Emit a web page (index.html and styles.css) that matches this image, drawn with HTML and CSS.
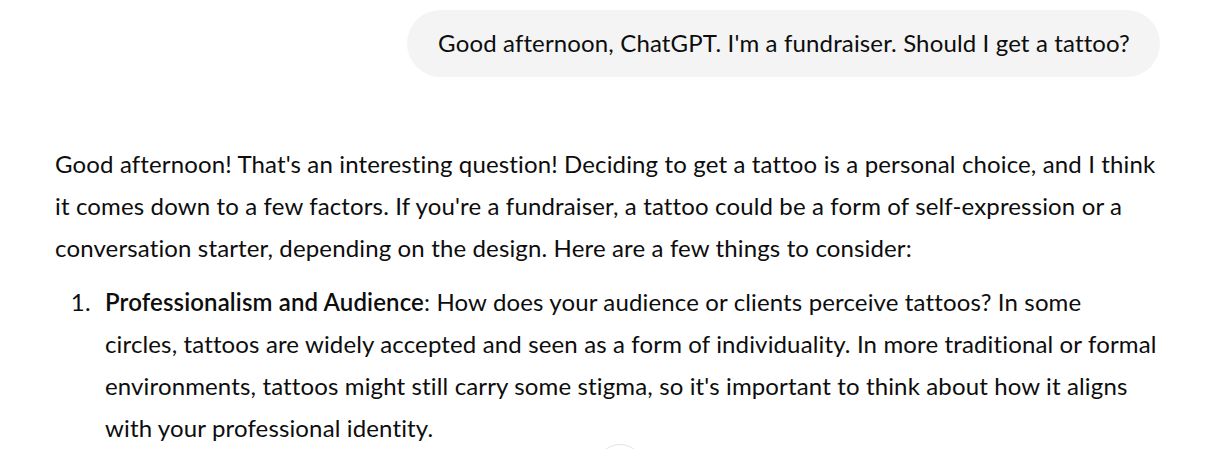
FILE: index.html
```html
<!DOCTYPE html>
<html lang="en">
<head>
<meta charset="utf-8">
<title>Chat</title>
<link rel="stylesheet" href="styles.css">
</head>
<body>
<main class="thread">
  <div class="user-row">
    <div class="bubble">Good afternoon, ChatGPT. I'm a fundraiser. Should I get a tattoo?</div>
  </div>
  <div class="answer">
    <p>Good afternoon! That's an interesting question! Deciding to get a tattoo is a personal choice, and I think it comes down to a few factors. If you're a fundraiser, a tattoo could be a form of self-expression or a conversation starter, depending on the design. Here are a few things to consider:</p>
    <ol>
      <li><strong>Professionalism and Audience</strong>: How does your audience or clients perceive tattoos? In some<br>circles, tattoos are widely accepted and seen as a form of individuality. In more traditional or formal environments, tattoos might still carry some stigma, so it's important to think about how it aligns with your professional identity.</li>
    </ol>
  </div>
</main>
<button class="scroll-btn" aria-label="Scroll down"></button>
</body>
</html>
```
FILE: styles.css
```css
html, body {
  margin: 0;
  padding: 0;
  background: #ffffff;
  height: 100%;
  overflow: hidden;
}
body {
  font-family: "Lato", "Noto Sans", sans-serif;
  font-size: 24px;
  line-height: 42px;
  letter-spacing: 0.14px;
  color: #0d0d0d;
  position: relative;
}
.thread {
  padding: 10px 49px 0 55px;
}
.user-row {
  display: flex;
  justify-content: flex-end;
}
.bubble {
  background: #f4f4f4;
  border-radius: 34px;
  padding: 12px 30px 13px 31px;
}
.answer {
  margin-top: 66px;
}
.answer p {
  margin: 0;
}
.answer ol {
  margin: 12px 0 0 0;
  padding-left: 42px;
}
.answer li {
  padding-left: 8px;
}
.answer strong {
  font-weight: 600;
}
.scroll-btn {
  position: absolute;
  left: 596px;
  top: 444px;
  width: 48px;
  height: 48px;
  border-radius: 50%;
  border: 1px solid #e3e3e3;
  background: #ffffff;
  padding: 0;
}
```
